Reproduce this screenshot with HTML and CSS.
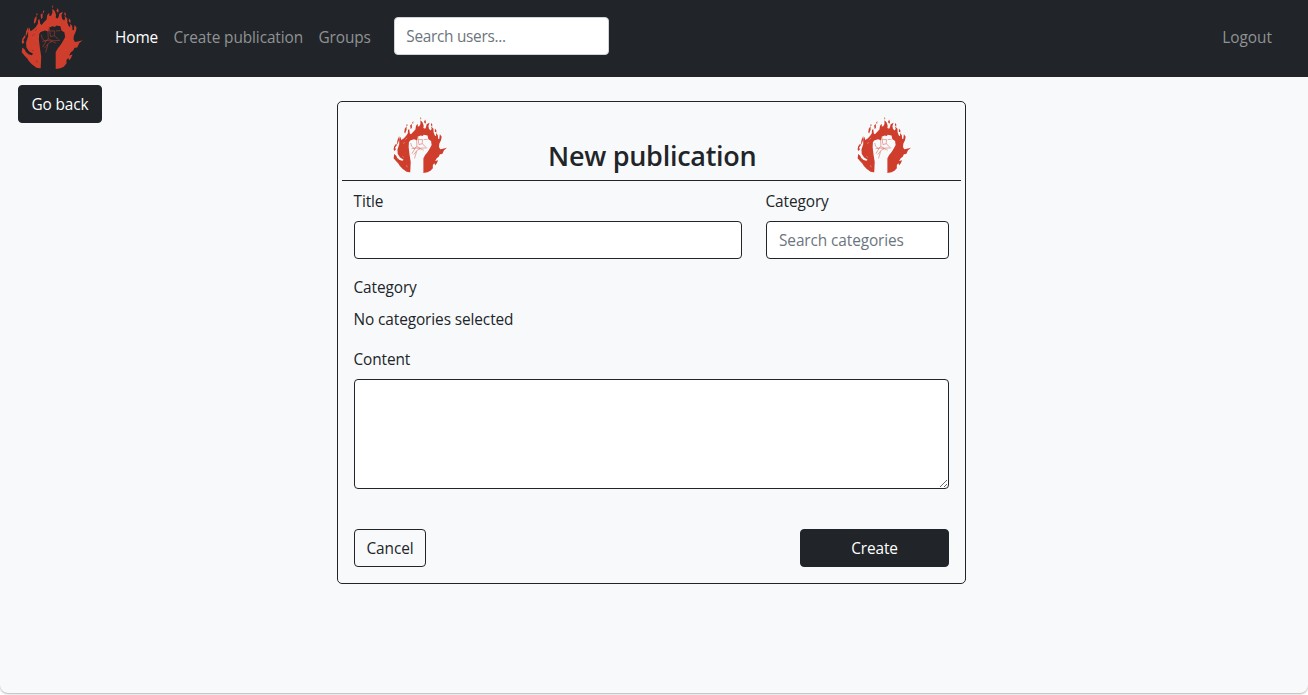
FILE: index.html
```html
<!DOCTYPE html>
<html lang="en">
<head>
<meta charset="utf-8">
<title>New publication</title>
<link rel="stylesheet" href="styles.css">
</head>
<body>
<svg class="defs" width="0" height="0" aria-hidden="true">
  <symbol id="logo" viewBox="28 14 184 196">
    <path class="flame" d="M84 205 L74 203 L60 193 L50 182 L44 170 L42 156 L50 163 L60 166 L64 162 L52 155 L44 143 L43 128 L49 110 L49 94 L53 84 L56 95 L64 90 L72 82 L78 73 L79 61 L83 59 L85 73 L89 76 L96 68 L104 60 L106 47 L112 40 L112 50 L117 49 L121 41 L121 28 L128 35 L132 46 L131 55 L137 57 L140 51 L142 42 L152 37 L148 48 L150 58 L156 63 L159 57 L157 49 L165 57 L166 71 L170 80 L174 83 L174 72 L180 79 L181 92 L186 91 L190 81 L191 95 L185 108 L184 119 L188 127 L197 125 L211 122 L201 130 L195 143 L187 144 L183 152 L176 157 L171 167 L181 164 L176 175 L171 181 L168 174 L163 180 L163 191 L155 200 L145 205 L131 207 Z"/>
    <path class="flame" d="M32 117 L39 107 L41 113 L35 121 L38 128 L32 133 L30 126Z M32 143 L39 149 L46 165 L48 177 L38 167 L30 157Z M43 96 L49 82 L50 91 L46 103 L41 112Z M68 57 L74 49 L74 61 L69 73 L66 69Z M73 45 L76 40 L77 46 L75 49Z M86 46 L92 41 L92 54 L88 59Z M93 37 L97 31 L96 42Z M120 17 L124 22 L122 27Z M133 34 L137 26 L140 35 L137 40Z M157 38 L161 42 L161 50 L157 46Z M170 56 L175 62 L175 70 L170 67Z M187 76 L193 84 L191 95 L185 90Z"/>
    <path class="hand" d="M86 212 L88 170 L84 145 L81 119 L82 103 L86 97 L99 93 L109 96 L111 84 L122 80 L129 82 L132 78 L145 80 L148 93 L157 99 L159 112 L154 122 L146 135 L137 146 L131 157 L131 212Z"/>
    <path class="gap" d="M62 108 L68 103 M70 94 L75 88 M60 151 L65 154 M74 181 L76 188"/>
    <path class="vein" d="M91 117 L100 125 L109 118 L108 96 L112 84 L113 94 L128 94 M132 94 L145 93 M109 118 L121 123 L144 122 M113 94 L116 111 L127 108 L139 119 M128 94 L127 108 M91 125 L105 122 L121 125 L110 130 L98 145 M108 134 L101 158 M104 122 L92 142 M121 125 L132 130 M88 105 L91 117"/>
    <path class="grain" d="M64 115h1 M74 122h1 M78 111h1 M68 99h1 M163 91h1 M163 119h1 M71 139h1 M160 151h1"/>
  </symbol>
</svg>

<div class="page">
  <header class="navbar">
    <svg class="navbar-logo"><use href="#logo"/></svg>
    <nav class="nav-links">
      <a class="nav-link active w-home">Home</a>
      <a class="nav-link w-create">Create publication</a>
      <a class="nav-link w-groups">Groups</a>
    </nav>
    <input class="control nav-search" type="text" placeholder="Search users...">
    <a class="nav-link logout">Logout</a>
  </header>

  <main class="main">
    <button class="btn btn-dark go-back" type="button">Go back</button>
    <form class="card">
      <div class="card-head">
        <svg class="card-logo"><use href="#logo"/></svg>
        <h1 class="card-title">New publication</h1>
        <svg class="card-logo"><use href="#logo"/></svg>
      </div>
      <div class="card-body">
        <div class="row">
          <div class="field">
            <label class="label">Title</label>
            <input class="control outlined" type="text">
          </div>
          <div class="field">
            <label class="label">Category</label>
            <input class="control outlined" type="text" placeholder="Search categories">
          </div>
        </div>
        <div class="field selected">
          <span class="label">Category</span>
          <span class="label">No categories selected</span>
        </div>
        <div class="field">
          <label class="label">Content</label>
          <textarea class="control outlined content"></textarea>
        </div>
        <div class="actions">
          <button class="btn btn-outline" type="button">Cancel</button>
          <button class="btn btn-dark create" type="button">Create</button>
        </div>
      </div>
    </form>
  </main>
</div>
</body>
</html>
```
FILE: styles.css
```css
* { box-sizing: border-box; }

body {
  margin: 0;
  height: 695px;
  overflow: hidden;
  background: #fff;
  color: #212529;
  font: 15.4px/24px "Open Sans", "Noto Sans", sans-serif;
  letter-spacing: -0.1px;
}

.defs { position: absolute; }

.page {
  height: 693px;
  background: #f8f9fb;
  border-radius: 0 0 8px 8px;
  box-shadow: 0 1px 2px rgba(0, 0, 0, 0.3);
}

.navbar {
  --hand: #212529;
  display: flex;
  align-items: flex-start;
  height: 77px;
  padding: 0 36px 0 21px;
  background: #212529;
}

.navbar-logo {
  width: 62px;
  height: 66px;
  margin: 4.3px 31.7px 0 0.3px;
}

.nav-links { display: flex; gap: 16px; padding-top: 26px; }
.nav-link { color: #909294; white-space: nowrap; }
.nav-link.active { color: #fff; }
.w-home { width: 42.5px; }
.w-create { width: 129px; }
.w-groups { width: 52px; }
.logout { margin: 26px 0 0 auto; letter-spacing: 0; }

.flame { fill: #cf3e2d; }
.hand { fill: var(--hand); }
.vein { fill: none; stroke: #cf3e2d; stroke-width: 1.7; opacity: 0.85; }
.gap { fill: none; stroke: var(--hand); stroke-width: 1.5; opacity: 0.7; }
.grain { fill: none; stroke: #e98a7d; stroke-width: 1.5; }

.control {
  display: block;
  width: 100%;
  height: 38px;
  padding: 6px 12px;
  border: 1px solid #ced4da;
  border-radius: 4px;
  background: #fff;
  color: #212529;
  font: inherit;
  letter-spacing: inherit;
}
.control::placeholder { color: #6c757d; opacity: 1; }
.nav-search { width: 215px; margin: 17px 0 0 23.8px; padding-left: 11px; letter-spacing: -0.3px; }
.outlined { border-color: #212529; }

.main { position: relative; padding-top: 24px; }

.btn {
  height: 38px;
  padding: 2px 11px 0;
  border: 1px solid #212529;
  border-radius: 4px;
  font: inherit;
  letter-spacing: inherit;
}
.btn-dark { background: #212529; color: #fff; }
.btn-outline { width: 72px; background: transparent; color: #212529; }
.go-back { position: absolute; left: 18px; top: 8px; width: 84px; }

.card {
  --hand: #f8f9fb;
  width: 629px;
  height: 483px;
  margin-left: 337px;
  padding: 0 4px;
  border: 1px solid #212529;
  border-radius: 5px;
}

.card-head {
  display: flex;
  justify-content: space-between;
  height: 79px;
  padding: 14px 49.5px 0 51px;
  border-bottom: 1px solid #212529;
}
.card-logo { width: 54.3px; height: 57.8px; }
.card-title {
  margin: 23px 0 0;
  font-size: 27px;
  font-weight: 600;
  line-height: 34px;
  letter-spacing: -0.27px;
}

.card-body { padding: 9px 12px 0; }
.row {
  display: grid;
  grid-template-columns: 388px 183px;
  gap: 24px;
  margin-bottom: 17px;
}
.field { display: flex; flex-direction: column; gap: 7px; }
.label { display: block; margin-left: -0.5px; }
.selected { gap: 8px; margin-bottom: 16px; }
.content { height: 110px; resize: vertical; }
.actions { display: flex; justify-content: space-between; margin-top: 40px; }
.create { width: 149px; }
```
